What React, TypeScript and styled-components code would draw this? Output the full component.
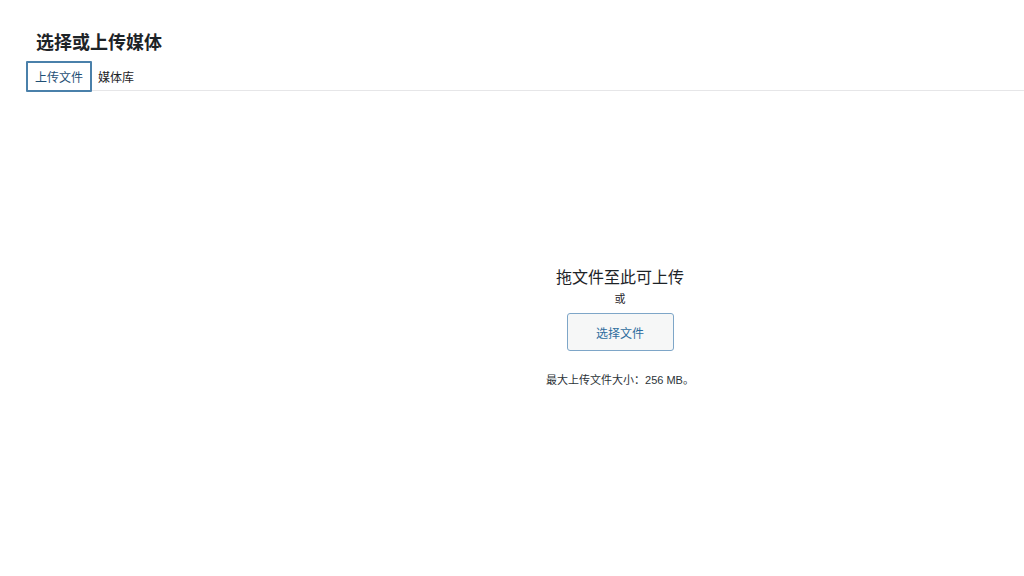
import React from "react";
import styled, { createGlobalStyle } from "styled-components";

const Global = createGlobalStyle`
  html, body { margin: 0; padding: 0; background: #fff; }
  body { font-family: "Liberation Sans", "Noto Sans CJK SC", sans-serif; color: #1d2327; }
  * { box-sizing: border-box; }
`;

const Frame = styled.div`
  width: 1024px;
  height: 576px;
  display: flex;
  flex-direction: column;
  background: #fff;
`;

const Header = styled.div`
  padding: 31px 0 0 36px;
  height: 61px;
`;

const Title = styled.h1`
  margin: 0;
  font-size: 18px;
  line-height: 24px;
  font-weight: 700;
  color: #1d2327;
`;

const Router = styled.div`
  margin-left: 26px;
  display: flex;
  align-items: stretch;
  height: 30px;
  border-bottom: 1px solid #e6e6e8;
`;

const Tab = styled.div<{ $active?: boolean }>`
  display: flex;
  align-items: center;
  padding: 0 ${(p) => (p.$active ? "7px" : "4px")};
  font-size: 12px;
  color: ${(p) => (p.$active ? "#1f4f75" : "#1d2327")};
  border: ${(p) => (p.$active ? "2px solid #4a80aa" : "2px solid transparent")};
  margin-bottom: -1px;
  height: 31px;
  border-radius: 1px;
`;

const Uploader = styled.div`
  flex: 1;
  display: flex;
  flex-direction: column;
  align-items: center;
  padding-left: 216px;
  padding-top: 176px;
`;

const Drop = styled.h2`
  margin: 0;
  font-size: 16px;
  line-height: 22px;
  font-weight: 400;
  color: #1d2327;
`;

const Or = styled.p`
  margin: 2px 0 0;
  font-size: 11px;
  line-height: 16px;
  color: #1d2327;
`;

const Button = styled.button`
  margin-top: 6px;
  width: 107px;
  height: 38px;
  border: 1px solid #7ea6c8;
  border-radius: 3px;
  background: #f6f7f7;
  color: #2e6d9e;
  font-family: "Liberation Sans", "Noto Sans CJK SC", sans-serif;
  font-size: 12px;
  cursor: pointer;
`;

const MaxSize = styled.p`
  margin: 21px 0 0;
  font-size: 11px;
  line-height: 16px;
  color: #2c3338;
`;

export default function App() {
  return (
    <>
      <Global />
      <Frame>
        <Header>
          <Title>选择或上传媒体</Title>
        </Header>
        <Router>
          <Tab $active>上传文件</Tab>
          <Tab>媒体库</Tab>
        </Router>
        <Uploader>
          <Drop>拖文件至此可上传</Drop>
          <Or>或</Or>
          <Button>选择文件</Button>
          <MaxSize>最大上传文件大小：256 MB。</MaxSize>
        </Uploader>
      </Frame>
    </>
  );
}
